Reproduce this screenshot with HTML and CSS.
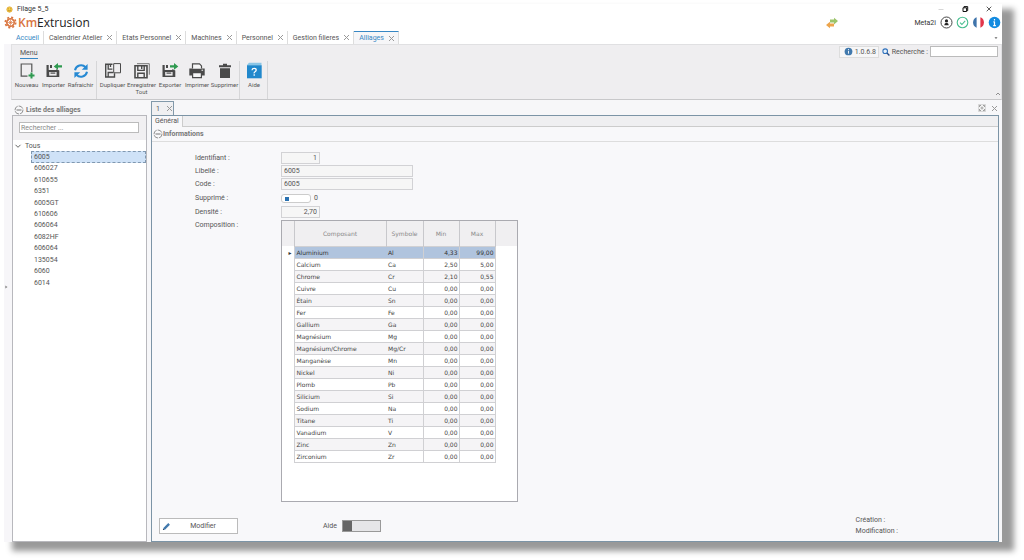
FILE: index.html
```html
<!DOCTYPE html>
<html lang="fr">
<head>
<meta charset="utf-8">
<title>Filage 5_5</title>
<link rel="stylesheet" href="styles.css">
</head>
<body>
<div class="window">
  <header class="titlebar">
    <svg class="app-icon" viewBox="0 0 8 8"><circle cx="4" cy="4" r="3" fill="#f7cf4a" stroke="#e0a72c"/><path d="M2.3 4.5Q4 6.5 5.7 4.5M2.8 2.9h.6M4.7 2.9h.6" fill="none" stroke="#8c6414" stroke-width=".7"/></svg>
    <span class="title">Filage 5_5</span>
    <div class="window-buttons">
      <button aria-label="Réduire"><svg viewBox="0 0 8 8"><path d="M1.5 4.5h5" stroke="#ccc" stroke-width=".8"/></svg></button>
      <button aria-label="Agrandir"><svg viewBox="0 0 8 8"><path d="M2 2.8h3.6V6.5H2zM3 2.6V1.6h3.7v4H5.8" fill="none" stroke="#111" stroke-width="1"/></svg></button>
      <button aria-label="Fermer"><svg viewBox="0 0 8 8"><path d="M1.7 1.7l4.6 4.6M6.3 1.7L1.7 6.3" stroke="#333" stroke-width=".8"/></svg></button>
    </div>
  </header>

  <div class="brandbar">
    <svg class="gear" viewBox="0 0 14 14"><g fill="none" stroke="#d9753f"><circle cx="7" cy="7" r="4" stroke-width="1.7"/><circle cx="7" cy="7" r="5.6" stroke-width="1.8" stroke-dasharray="2.2 2.2"/><path d="M7 3.5v7M3.5 7h7M4.6 4.6l4.8 4.8M9.4 4.6L4.6 9.4" stroke-width=".7"/></g></svg>
    <span class="brand"><span class="brand-km">Km</span>Extrusion</span>
    <svg class="sync" viewBox="0 0 14 12"><path d="M5 2.6h4V.8l4 3.3-4 3.3V5.4H5z" fill="#9cc46a"/><path d="M9 6.6H5V4.8L1 8l4 3.2V9.400h4z" fill="#eda54c"/></svg>
    <div class="account">
      <span>Meta2i</span>
      <svg viewBox="0 0 13 13"><circle cx="6.5" cy="6.5" r="5.5" fill="#fff" stroke="#333" stroke-width=".9"/><circle cx="6.5" cy="4.9" r="1.6" fill="#222"/><path d="M4.3 9.2Q4.4 7.5 5.7 7h1.6q1.3.5 1.4 2.2z" fill="#222"/></svg>
      <svg viewBox="0 0 13 13"><circle cx="6.5" cy="6.5" r="5.3" fill="#fff" stroke="#49bf90" stroke-width="1.1"/><path d="M4 6.6l1.9 1.9 3.3-3.7" fill="none" stroke="#49bf90" stroke-width="1.1"/></svg>
      <svg viewBox="0 0 13 13"><path d="M4.6 1.3a5.6 5.6 0 0 0 0 10.4z" fill="#3f74ab"/><path d="M8.4 1.3a5.6 5.6 0 0 1 0 10.4z" fill="#e2364b"/></svg>
      <svg viewBox="0 0 13 13"><circle cx="6.5" cy="6.5" r="5.8" fill="#138be0"/><path d="M6.5 3v1.5M6.5 5.6v4.2M5.4 5.8h1.1M5.2 9.7h2.7" stroke="#fff" stroke-width="1.2"/></svg>
    </div>
  </div>

  <nav class="tabs">
    <div class="tab home"><a href="#">Accueil</a></div>
    <div class="tab"><a href="#">Calendrier Atelier</a><button class="x" aria-label="Fermer"></button></div>
    <div class="tab"><a href="#">Etats Personnel</a><button class="x" aria-label="Fermer"></button></div>
    <div class="tab"><a href="#">Machines</a><button class="x" aria-label="Fermer"></button></div>
    <div class="tab"><a href="#">Personnel</a><button class="x" aria-label="Fermer"></button></div>
    <div class="tab"><a href="#">Gestion filieres</a><button class="x" aria-label="Fermer"></button></div>
    <div class="tab active"><a href="#">Alliages</a><button class="x" aria-label="Fermer"></button></div>
    <button class="more" aria-label="Plus d'onglets"><svg viewBox="0 0 6 6"><path d="M1.5 2.3h3L3 4z" fill="#666"/></svg></button>
  </nav>

  <div class="columns">
    <aside class="rail"><button aria-label="Déplier"><svg viewBox="0 0 4 6"><path d="M.8 1.4L3 3 .8 4.6z" fill="#888"/></svg></button></aside>
    <div class="content">
      <section class="ribbon">
        <div class="ribbon-head">
          <a class="menu" href="#">Menu</a>
          <div class="quick">
            <button class="version"><svg viewBox="0 0 10 10"><circle cx="5" cy="5" r="4.3" fill="#4179ad"/><path d="M5 2.3v1M5 4.2v3.2" stroke="#fff" stroke-width="1"/></svg>1.0.6.8</button>
            <svg class="lens" viewBox="0 0 8 8"><circle cx="3.2" cy="3.2" r="2.3" fill="#e8f2fc" stroke="#3173bd" stroke-width="1.1"/><path d="M5 5l2.4 2.4" stroke="#2a4d86" stroke-width="1.4"/></svg>
            <label for="search">Recherche :</label>
            <input id="search" type="text">
          </div>
        </div>
        <div class="tools">
          <div class="group g1">
            <button><svg viewBox="0 0 18 18"><path d="M9.5 14.2H3.2V2h10.6v8" fill="none" stroke="#555" stroke-width="1.2"/><path d="M13.5 10.5v6M10.5 13.5h6" stroke="#2f9a50" stroke-width="2"/></svg>Nouveau</button>
            <button><svg viewBox="0 0 18 18"><path d="M1.5 3h2.2v5h7.6V7l3 1.5V15H1.5z" fill="#4a4a4a"/><path d="M5 3h2v3H5z" fill="#4a4a4a"/><path d="M4.2 10h7.4v3.6H4.2z" fill="#efeef0"/><path d="M5.5 10.5h4.8v1.2H5.5z" fill="#4a4a4a"/><path d="M17 3.2h-4V1L8.7 4.4 13 7.8V5.6h4z" fill="#2f9a50"/></svg>Importer</button>
            <button><svg viewBox="0 0 18 18"><g fill="none" stroke="#2689d3" stroke-width="2"><path d="M3 8.3a6.2 6.2 0 0 1 10.6-3.1"/><path d="M15 9.7A6.2 6.2 0 0 1 4.4 12.8"/></g><path d="M15.6 2v5.8H9.8zM2.4 16v-5.8h5.8z" fill="#2689d3"/></svg>Rafraichir</button>
          </div>
          <div class="group g2">
            <button><svg viewBox="0 0 18 18"><path d="M10.5 11.3V15H1.7V2.2h6.8" fill="none" stroke="#4a4a4a" stroke-width="1.4"/><path d="M4.2 2.2v5h4.2M6.5 2.5V5M4.2 15v-4.5h5" fill="none" stroke="#4a4a4a" stroke-width="1.3"/><path d="M9.7 1.6h6.8v9.2H9.7z" fill="#efeef0" stroke="#4a4a4a"/></svg>Dupliquer</button>
            <button><svg viewBox="0 0 18 18"><path d="M4 1.7h12.3v11" fill="none" stroke="#777"/><path d="M2 3.7h12V15.7H2z" fill="none" stroke="#4a4a4a" stroke-width="1.6"/><path d="M4.8 3.7v4.7h6.4V3.7M8.7 4v3M4.8 15.5v-4.2h6.4v4.2" fill="none" stroke="#4a4a4a" stroke-width="1.4"/></svg>Enregistrer<br>Tout</button>
            <button><svg viewBox="0 0 18 18"><path d="M1.5 3h2.2v5h7.6V7l3 1.5V15H1.5z" fill="#4a4a4a"/><path d="M5 3h2v3H5z" fill="#4a4a4a"/><path d="M4.2 10h7.4v3.6H4.2z" fill="#efeef0"/><path d="M5.5 10.5h4.8v1.2H5.5z" fill="#4a4a4a"/><path d="M9 3.2h4V1l4.3 3.4L13 7.8V5.6H9z" fill="#2f9a50"/></svg>Exporter</button>
            <button><svg viewBox="0 0 18 18"><path d="M1.3 6.5h15.4v7H1.3z" fill="#4a4a4a"/><path d="M4.5 6.5V1.9h7l2 2v2.6" fill="#f6f6f7" stroke="#4a4a4a" stroke-width="1.2"/><path d="M4.6 10.6h8.8v5H4.6z" fill="#f6f6f7" stroke="#4a4a4a" stroke-width="1.2"/><path d="M13.5 8.2h1.6" stroke="#fff"/></svg>Imprimer</button>
            <button><svg viewBox="0 0 18 18"><path d="M3 3.2h4V1.8h4v1.4h4v2H3zM4 6.3h10V16H4z" fill="#4a4a4a"/></svg>Supprimer</button>
          </div>
          <div class="group g3">
            <button><svg viewBox="0 0 18 18"><path d="M2 3L4 .8h12.5v3H2z" fill="#8cc6e6"/><path d="M2 3.3h14.7v13H2z" fill="#2188cc"/><path d="M7 8.2q.2-1.8 2.2-1.8t2 1.7q0 1-1.1 1.6t-.9 1.6M9.2 12.2v1.5" fill="none" stroke="#fff" stroke-width="1.3"/></svg>Aide</button>
          </div>
          <button class="collapse" aria-label="Réduire le ruban"><svg viewBox="0 0 6 6"><path d="M1 4l2-2 2 2" fill="none" stroke="#777" stroke-width=".8"/></svg></button>
        </div>
      </section>

      <div class="workspace">
        <aside class="sidebar">
          <h2><svg viewBox="0 0 10 10"><circle cx="5" cy="5" r="4" fill="none" stroke="#777" stroke-width=".8" stroke-dasharray="5 1"/><path d="M2.5 5h5" stroke="#777"/></svg>Liste des alliages</h2>
          <div class="side-panel">
            <div class="side-search"><input type="text" aria-label="Rechercher" placeholder="Rechercher ..."></div>
            <div class="tree">
              <div class="root"><svg viewBox="0 0 8 8"><path d="M1.5 2.8L4 5.3l2.500-2.500" fill="none" stroke="#555" stroke-width=".9"/></svg>Tous</div>
              <ul>
                <li class="selected">6005</li><li>606027</li><li>610655</li><li>6351</li><li>6005GT</li><li>610606</li><li>606064</li><li>6082HF</li><li>606064</li><li>135054</li><li>6060</li><li>6014</li>
              </ul>
            </div>
          </div>
        </aside>

        <main class="document">
          <div class="doc-tabs">
            <div class="doc-tab"><span>1</span><button class="x" aria-label="Fermer"></button></div>
            <div class="doc-actions">
              <button aria-label="Plein écran"><svg viewBox="0 0 8 8"><path d="M.5 .5h7v7h-7z" fill="#f4f4f4" stroke="#bbb" stroke-width=".5"/><path d="M1.500 3V1.500H3M5 1.500h1.500V3M6.500 5v1.500H5M3 6.500H1.500V5" fill="none" stroke="#777" stroke-width=".7"/><circle cx="4" cy="4" r="1" fill="none" stroke="#777" stroke-width=".6"/></svg></button>
              <button class="x" aria-label="Fermer"></button>
            </div>
          </div>
          <div class="doc-body">
            <div class="page-tabs"><a href="#">Général</a></div>
            <h2><svg viewBox="0 0 10 10"><circle cx="5" cy="5" r="4" fill="none" stroke="#777" stroke-width=".8" stroke-dasharray="5 1"/><path d="M2.5 5h5" stroke="#777"/></svg>Informations</h2>
            <form class="form">
              <label for="ident">Identifiant :</label><input id="ident" class="short" type="text" value="1">
              <label for="lib">Libellé :</label><input id="lib" class="long" type="text" value="6005">
              <label for="code">Code :</label><input id="code" class="long" type="text" value="6005">
              <label for="supp">Supprimé :</label><div class="flag"><input id="supp" type="checkbox"><span>0</span></div>
              <label for="dens">Densité :</label><input id="dens" class="short" type="text" value="2,70">
              <span class="comp-label">Composition :</span>
              <div class="grid">
                <table>
                  <colgroup><col class="c-mark"><col class="c-name"><col class="c-sym"><col class="c-num"><col class="c-num"><col></colgroup>
                  <thead><tr><th></th><th>Composant</th><th>Symbole</th><th>Min</th><th>Max</th><th></th></tr></thead>
                  <tbody>
                    <tr class="current"><td>▸</td><td>Aluminium</td><td>Al</td><td>4,33</td><td>99,00</td><td></td></tr>
                    <tr><td></td><td>Calcium</td><td>Ca</td><td>2,50</td><td>5,00</td><td></td></tr>
                    <tr><td></td><td>Chrome</td><td>Cr</td><td>2,10</td><td>0,55</td><td></td></tr>
                    <tr><td></td><td>Cuivre</td><td>Cu</td><td>0,00</td><td>0,00</td><td></td></tr>
                    <tr><td></td><td>Étain</td><td>Sn</td><td>0,00</td><td>0,00</td><td></td></tr>
                    <tr><td></td><td>Fer</td><td>Fe</td><td>0,00</td><td>0,00</td><td></td></tr>
                    <tr><td></td><td>Gallium</td><td>Ga</td><td>0,00</td><td>0,00</td><td></td></tr>
                    <tr><td></td><td>Magnésium</td><td>Mg</td><td>0,00</td><td>0,00</td><td></td></tr>
                    <tr><td></td><td>Magnésium/Chrome</td><td>Mg/Cr</td><td>0,00</td><td>0,00</td><td></td></tr>
                    <tr><td></td><td>Manganèse</td><td>Mn</td><td>0,00</td><td>0,00</td><td></td></tr>
                    <tr><td></td><td>Nickel</td><td>Ni</td><td>0,00</td><td>0,00</td><td></td></tr>
                    <tr><td></td><td>Plomb</td><td>Pb</td><td>0,00</td><td>0,00</td><td></td></tr>
                    <tr><td></td><td>Silicium</td><td>Si</td><td>0,00</td><td>0,00</td><td></td></tr>
                    <tr><td></td><td>Sodium</td><td>Na</td><td>0,00</td><td>0,00</td><td></td></tr>
                    <tr><td></td><td>Titane</td><td>Ti</td><td>0,00</td><td>0,00</td><td></td></tr>
                    <tr><td></td><td>Vanadium</td><td>V</td><td>0,00</td><td>0,00</td><td></td></tr>
                    <tr><td></td><td>Zinc</td><td>Zn</td><td>0,00</td><td>0,00</td><td></td></tr>
                    <tr><td></td><td>Zirconium</td><td>Zr</td><td>0,00</td><td>0,00</td><td></td></tr>
                  </tbody>
                </table>
              </div>
            </form>
            <footer class="doc-foot">
              <button class="edit"><svg viewBox="0 0 10 10"><path d="M1 9l.8-2.600L7 1.200 8.800 3 3.600 8.200z" fill="#4179ad"/><path d="M1 9l.5-1.500 1 1z" fill="#223"/></svg><span>Modifier</span></button>
              <label class="help">Aide<input type="checkbox"></label>
              <div class="stamps"><span>Création :</span><span>Modification :</span></div>
            </footer>
          </div>
        </main>
      </div>
    </div>
  </div>
</div>
</body>
</html>
```

FILE: styles.css
```css
* { box-sizing: border-box; }
body {
  margin: 0;
  padding: 4px 22px 18px 4px;
  min-height: 100vh;
  display: flex;
  background: #fff;
  color: #555;
  font: 7px/10px Roboto, "Open Sans", sans-serif;
}
button, input { font: inherit; color: inherit; margin: 0; padding: 0; border-radius: 0; }
button { border: 0; background: none; }
a { color: inherit; text-decoration: none; }
svg { display: block; flex: none; }
h2 { margin: 0; font-size: 7px; font-weight: 700; color: #777; display: flex; align-items: center; }
h2 svg { width: 10px; height: 10px; }

.window {
  flex: 1;
  display: flex;
  flex-direction: column;
  min-width: 0;
  background: #fff;
  box-shadow: 10px 7px 6px 2px #999;
}

.titlebar { display: flex; align-items: center; height: 10px; padding: 0 9px 0 2px; color: #333; }
.app-icon { width: 7px; height: 7px; margin-right: 4px; }
.title { flex: 1; }
.window-buttons { display: flex; gap: 16px; }
.window-buttons svg { width: 8px; height: 8px; }

.brandbar { display: flex; align-items: center; height: 17px; padding: 0 1px 0 0; }
.gear { width: 13px; height: 13px; }
.brand { flex: 1; font: 12px/17px "Open Sans", sans-serif; color: #222; margin-left: 1px; }
.brand-km { color: #d9753f; font-weight: 600; }
.sync { width: 14px; height: 12px; margin-right: 75px; }
.account { display: flex; align-items: center; gap: 3px; color: #333; }
.account span { margin-right: 1px; }
.account svg { width: 13px; height: 13px; }

.tabs { display: flex; height: 13px; padding-left: 7px; }
.tab { display: flex; align-items: center; justify-content: space-between; gap: 5px; padding: 0 4px 0 5px; border-right: 1px solid #ddd; }
.home { color: #3787c4; }
.active { color: #3787c4; border-top: 1px solid #3787c4; background: #f6f6f8; }
.more { margin-left: auto; width: 12px; }
.more svg { width: 6px; height: 6px; margin: auto; }

.x { width: 5px; height: 5px; background: linear-gradient(45deg, transparent 44%, #999 44% 56%, transparent 56%), linear-gradient(-45deg, transparent 44%, #999 44% 56%, transparent 56%); }

.columns { flex: 1; display: flex; background: #f7f7f9; }
.rail { width: 7px; display: flex; align-items: center; padding-bottom: 12px; background: #f7f6f9; }
.rail svg { width: 5px; height: 6px; }
.content { flex: 1; display: flex; flex-direction: column; min-width: 0; }

.ribbon { background: #efeef0; border: 1px solid #e0e0e2; border-bottom: 1px solid #c8c8ca; height: 56px; }
.ribbon-head { display: flex; justify-content: space-between; height: 16px; padding: 1px 3px 0 8px; }
.menu { height: 13px; padding-top: 2px; border-bottom: 1px solid #3787c4; }
.quick { display: flex; align-items: center; height: 11px; }
.version { display: flex; align-items: center; gap: 2px; width: 40px; height: 12px; padding-left: 4px; border: 1px solid #ddd; background: #f6f6f7; }
.version svg { width: 9px; height: 9px; }
.lens { width: 8px; height: 8px; margin: 0 2px 0 3px; }
.quick input { width: 68px; height: 11px; margin-left: 2px; border: 1px solid #bbb; background: #fff; }

.tools { display: flex; height: 38px; font-size: 6px; line-height: 7px; }
.group { display: grid; border-right: 1px solid #d6d6d8; padding-left: 1px; }
.g1 { grid-template-columns: repeat(3, 27px); width: 85px; }
.g2 { grid-template-columns: 29px 29px 28px 26px 29px; }
.g3 { grid-template-columns: 26px; }
.group button { display: flex; flex-direction: column; align-items: center; white-space: nowrap; }
.group svg { width: 18px; height: 18px; margin: 1px 0; }
.collapse { margin-left: auto; align-self: end; padding-bottom: 2px; }
.collapse svg { width: 6px; height: 6px; }

.workspace { flex: 1; display: flex; gap: 4px; padding: 0 3px 0 1px; }
.sidebar { width: 135px; display: flex; flex-direction: column; }
.sidebar h2 { height: 15px; padding: 4px 0 0 2px; gap: 2px; }
.side-panel { flex: 1; border: 1px solid #b8b8bd; background: #fff; }
.side-search { padding: 6px 7px 7px 6px; background: #f1f0f2; }
.side-search input { display: block; width: 100%; height: 11px; padding: 0 1px; border: 1px solid #bbb; background: #fff; }
.side-search input::placeholder { color: #888; opacity: 1; }
.root { display: flex; align-items: center; gap: 3px; height: 11px; padding-left: 1px; }
.root svg { width: 8px; height: 8px; }
.tree ul { display: grid; height: 138px; list-style: none; margin: 0; padding: 0 0 0 18px; }
.tree li { line-height: 11px; padding-left: 3px; }
.tree .selected { background: #cfe2f7; border: 1px dashed #8098b0; line-height: 10px; padding-left: 2px; }

.document { flex: 1; display: flex; flex-direction: column; min-width: 0; }
.doc-tabs { display: flex; justify-content: space-between; align-items: end; height: 15px; }
.doc-tab { display: flex; align-items: center; gap: 7px; width: 23px; height: 14px; padding-left: 4px; background: #f0f0f2; border: 1px solid #8299aa; border-bottom: 0; }
.doc-actions { display: flex; align-items: center; gap: 6px; height: 14px; padding-right: 2px; }
.doc-actions svg { width: 8px; height: 8px; }
.doc-body { flex: 1; display: flex; flex-direction: column; border: 1px solid #7c94a6; background: #f8f8fa; }
.page-tabs { height: 11px; background: #efeff1; border-bottom: 1px solid #ccc; display: flex; }
.page-tabs a { height: 11px; padding: 0 3px; background: #f8f8fa; border-right: 1px solid #ccc; }
.doc-body h2 { height: 15px; padding-left: 1px; border-bottom: 1px solid #ddd; }

.form {
  display: grid;
  grid-template-columns: 86px auto;
  grid-template-rows: 13px 13px 14px 14px 14px auto;
  justify-content: start;
  align-items: center;
  padding: 9px 0 0 43px;
}
.form input[type="text"] { height: 12px; padding: 0 2px; border: 1px solid #d2d2d5; background: #f6f6f6; }
.form .short { width: 39px; text-align: right; }
.form .long { width: 132px; }
.flag { display: flex; align-items: center; gap: 3px; }
.flag input { appearance: none; width: 30px; height: 9px; border: 1px solid #ccc; border-radius: 3px; background: linear-gradient(#2a71b0, #2a71b0) 3px 2px / 4px 4px no-repeat #fff; }
.comp-label { align-self: start; padding-top: 1px; }
.grid { width: 237px; height: 282px; margin-top: 1px; border: 1px solid #aaaab0; background: #fff; }
table { width: 100%; table-layout: fixed; border-collapse: collapse; font: 6px/9px "DejaVu Sans", sans-serif; color: #444; }
.c-mark { width: 12px; }
.c-name { width: 92px; }
.c-sym { width: 37px; }
.c-num { width: 36px; }
th { height: 25px; padding: 0; background: #f0eff1; border-right: 1px solid #c8c8cc; font-weight: 400; color: #888; }
th:last-child { border-right: 0; }
td { height: 12px; padding: 0 2px; border: 1px solid #d0d0d3; overflow: hidden; white-space: nowrap; }
td:first-child, td:last-child { border-width: 0; background: #fff; }
td:first-child { text-align: right; }
td:nth-child(2) { border-right: 0; }
td:nth-child(3) { border-left: 0; }
td:nth-child(4), td:nth-child(5) { text-align: right; padding-right: 1px; }
tbody tr:nth-child(odd) { background: #f5f4f6; }
tbody tr.current { background: #b0c4de; color: #333; }

.doc-foot { display: flex; align-items: center; margin-top: auto; padding: 0 100px 4px 7px; }
.edit { display: flex; align-items: center; width: 79px; height: 16px; padding: 0 2px; border: 1px solid #bbb; background: #fff; }
.edit svg { width: 9px; height: 9px; }
.edit span { flex: 1; }
.help { display: flex; align-items: center; gap: 5px; margin-left: 85px; }
.help input { appearance: none; width: 39px; height: 12px; margin: 0; border: 1px solid #999; background: linear-gradient(to right, #666 9px, #e6e6e8 9px); }
.stamps { display: flex; flex-direction: column; margin-left: auto; line-height: 11px; }
```
